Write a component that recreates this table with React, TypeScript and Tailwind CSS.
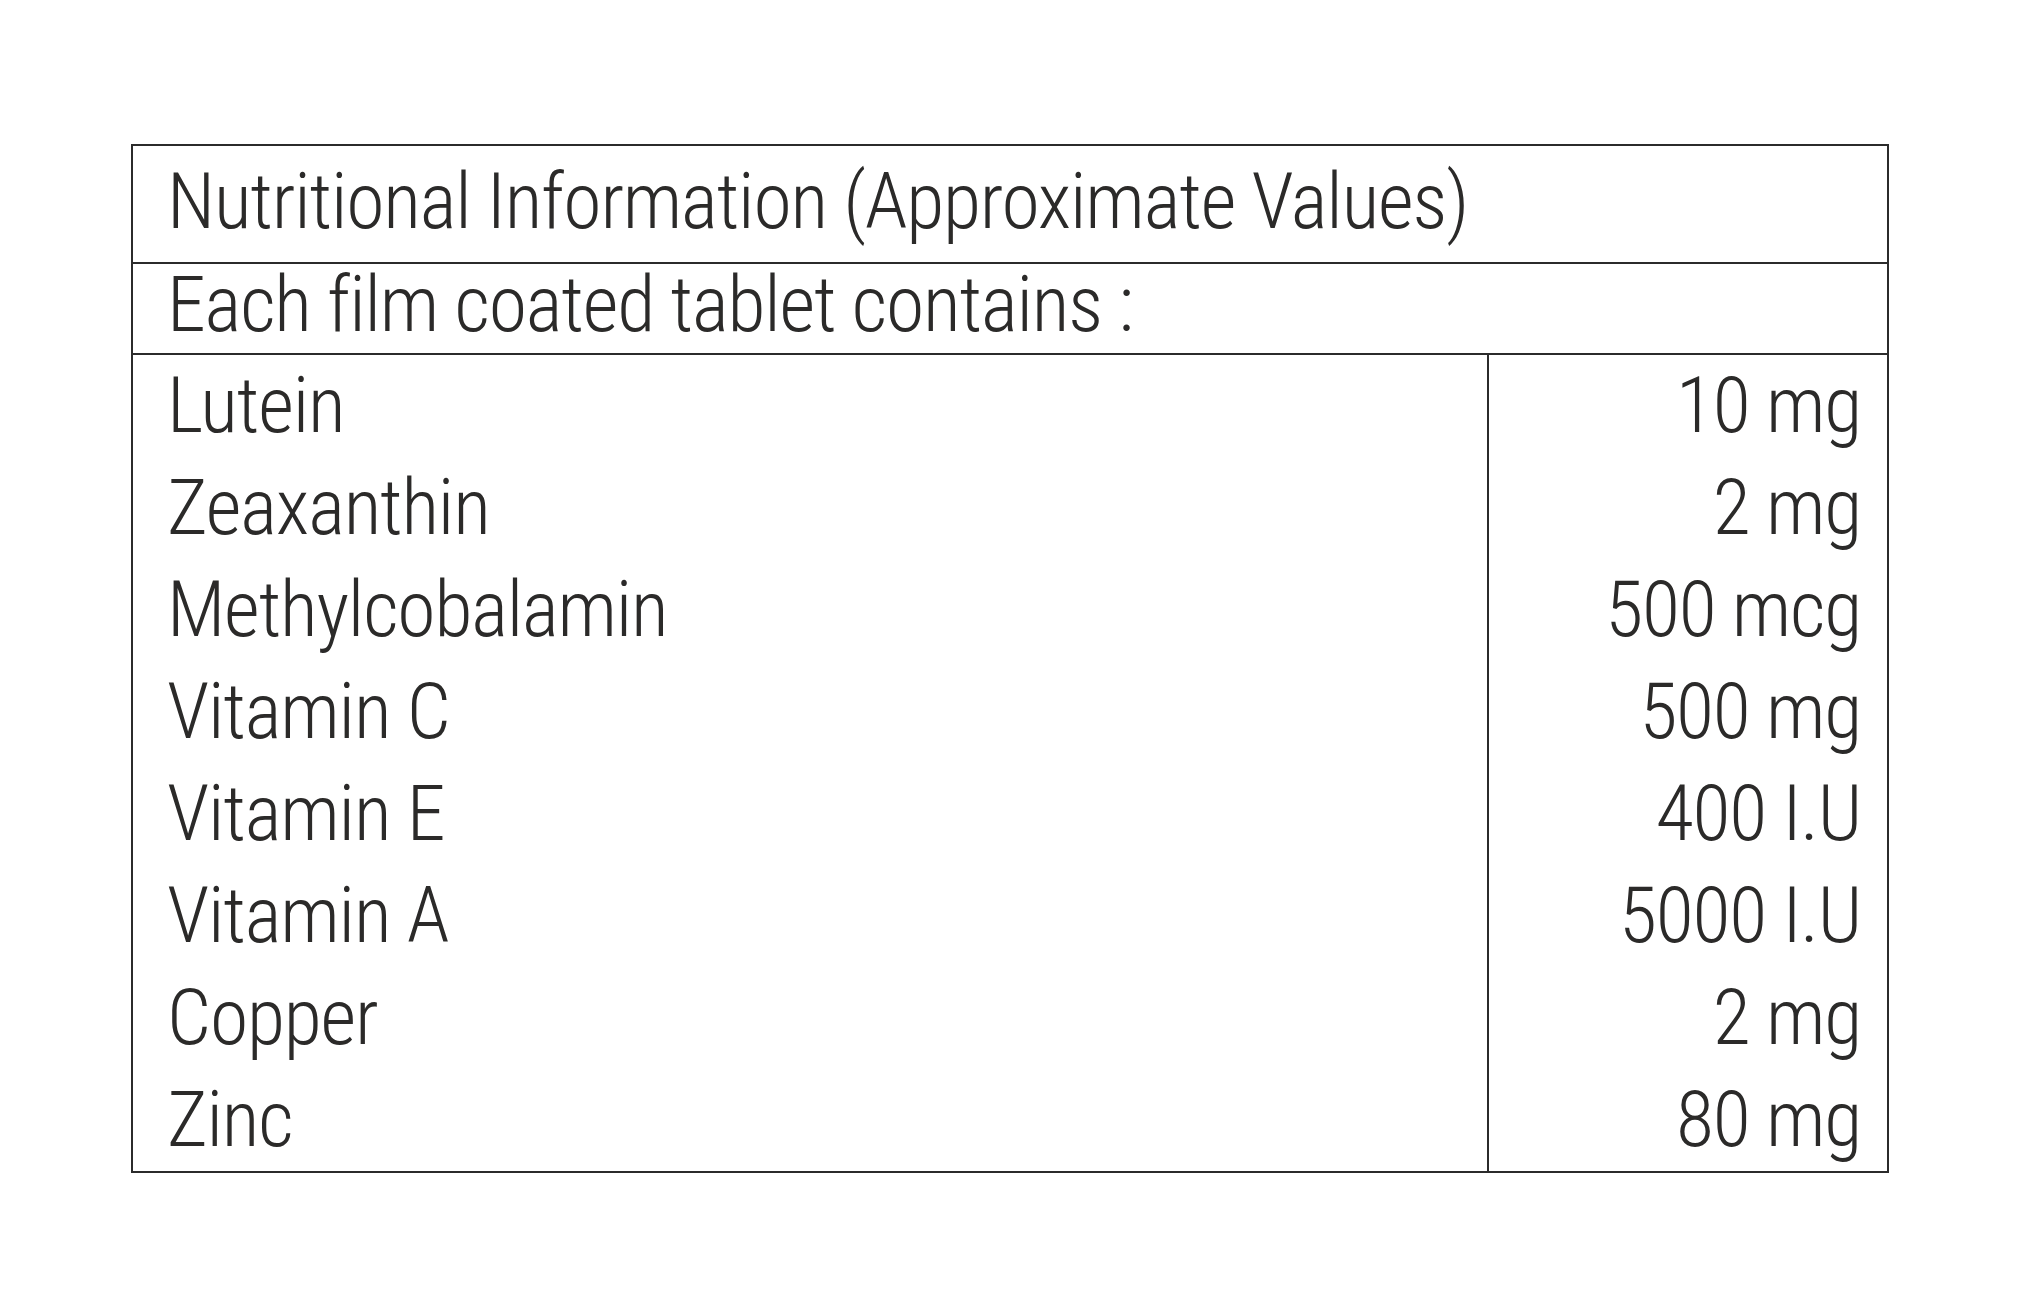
const rows = [
  ["Lutein", "10 mg"],
  ["Zeaxanthin", "2 mg"],
  ["Methylcobalamin", "500 mcg"],
  ["Vitamin C", "500 mg"],
  ["Vitamin E", "400 I.U"],
  ["Vitamin A", "5000 I.U"],
  ["Copper", "2 mg"],
  ["Zinc", "80 mg"],
];

export default function App() {
  return (
    <div className="w-[2021px] h-[1316px] bg-white pt-[144px] pl-[131px] text-[#2b2a29] font-['Roboto_Condensed','Liberation_Sans_Narrow',sans-serif] font-[350] text-[78px] tracking-[-1.2px]">
      <div className="w-[1758px] border-2 border-[#2b2b2b]">
        {/* header rows */}
        <div className="h-[118px] pl-[34px] pt-[5px] leading-[102px] border-b-2 border-[#2b2b2b] whitespace-nowrap">
          Nutritional Information (Approximate Values)
        </div>
        <div className="h-[91px] pl-[34px] leading-[82px] border-b-2 border-[#2b2b2b] whitespace-nowrap">
          Each film coated tablet contains :
        </div>

        {/* ingredient / amount columns */}
        <div className="grid grid-cols-[1354px_1fr]">
          <div className="pl-[34px] leading-[102px]">
            {rows.map(([name]) => (
              <div key={name} className="whitespace-nowrap">{name}</div>
            ))}
          </div>
          <div className="border-l-2 border-[#2b2b2b] pr-[26px] text-right leading-[102px]">
            {rows.map(([name, value]) => (
              <div key={name} className="whitespace-nowrap">{value}</div>
            ))}
          </div>
        </div>
      </div>
    </div>
  );
}
